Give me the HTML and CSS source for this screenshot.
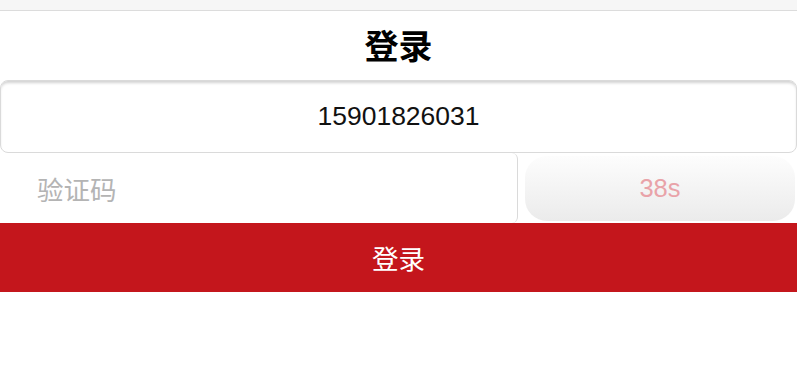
FILE: index.html
```html
<!DOCTYPE html>
<html lang="zh-CN">
<head>
<meta charset="utf-8">
<title>登录</title>
<link rel="stylesheet" href="styles.css">
</head>
<body>
<div class="page">
  <div class="topbar"></div>
  <header class="header"><h1 class="title">登录</h1></header>
  <form class="form">
    <div class="phone">15901826031</div>
    <div class="code-row">
      <div class="code-input">验证码</div>
      <div class="code-btn">38s</div>
    </div>
    <div class="submit">登录</div>
  </form>
</div>
</body>
</html>
```
FILE: styles.css
```css
html, body {
  margin: 0;
  padding: 0;
  background: #ffffff;
}
body {
  font-family: "Liberation Sans", "Noto Sans CJK SC", sans-serif;
}
.page {
  width: 797px;
}
.topbar {
  height: 10px;
  background: #f6f6f6;
  border-bottom: 1px solid #dcdcdc;
}
.header {
  height: 69px;
  display: flex;
  align-items: center;
  justify-content: center;
}
.title {
  margin: 0;
  font-size: 34px;
  font-weight: bold;
  color: #000;
  font-family: "Noto Sans CJK SC", sans-serif;
  line-height: 1;
  padding-bottom: 2px;
}
.form {
  margin: 0;
  display: flex;
  flex-direction: column;
}
.phone {
  height: 73px;
  box-sizing: border-box;
  border: 1px solid #dadada;
  border-radius: 8px;
  box-shadow: inset 0 3px 3px -1px rgba(0,0,0,0.18);
  display: flex;
  align-items: center;
  justify-content: center;
  font-size: 26.5px;
  color: #111;
}
.code-row {
  height: 70px;
  display: flex;
  align-items: center;
}
.code-input {
  width: 518px;
  height: 70px;
  box-sizing: border-box;
  border-right: 1px solid #dadada;
  border-radius: 0 6px 6px 0;
  display: flex;
  align-items: center;
  padding-left: 37px;
  font-size: 26.5px;
  color: #b4b4b4;
  font-family: "Noto Sans CJK SC", sans-serif;
}
.code-btn {
  margin-left: 7px;
  width: 270px;
  height: 65px;
  border-radius: 22px;
  background: linear-gradient(#fdfdfd, #ebebeb);
  display: flex;
  align-items: center;
  justify-content: center;
  font-size: 25.5px;
  color: #e9a3a9;
}
.submit {
  height: 69px;
  background: #c4161c;
  color: #fff;
  display: flex;
  align-items: center;
  justify-content: center;
  font-size: 26.5px;
  font-family: "Noto Sans CJK SC", sans-serif;
}
```
